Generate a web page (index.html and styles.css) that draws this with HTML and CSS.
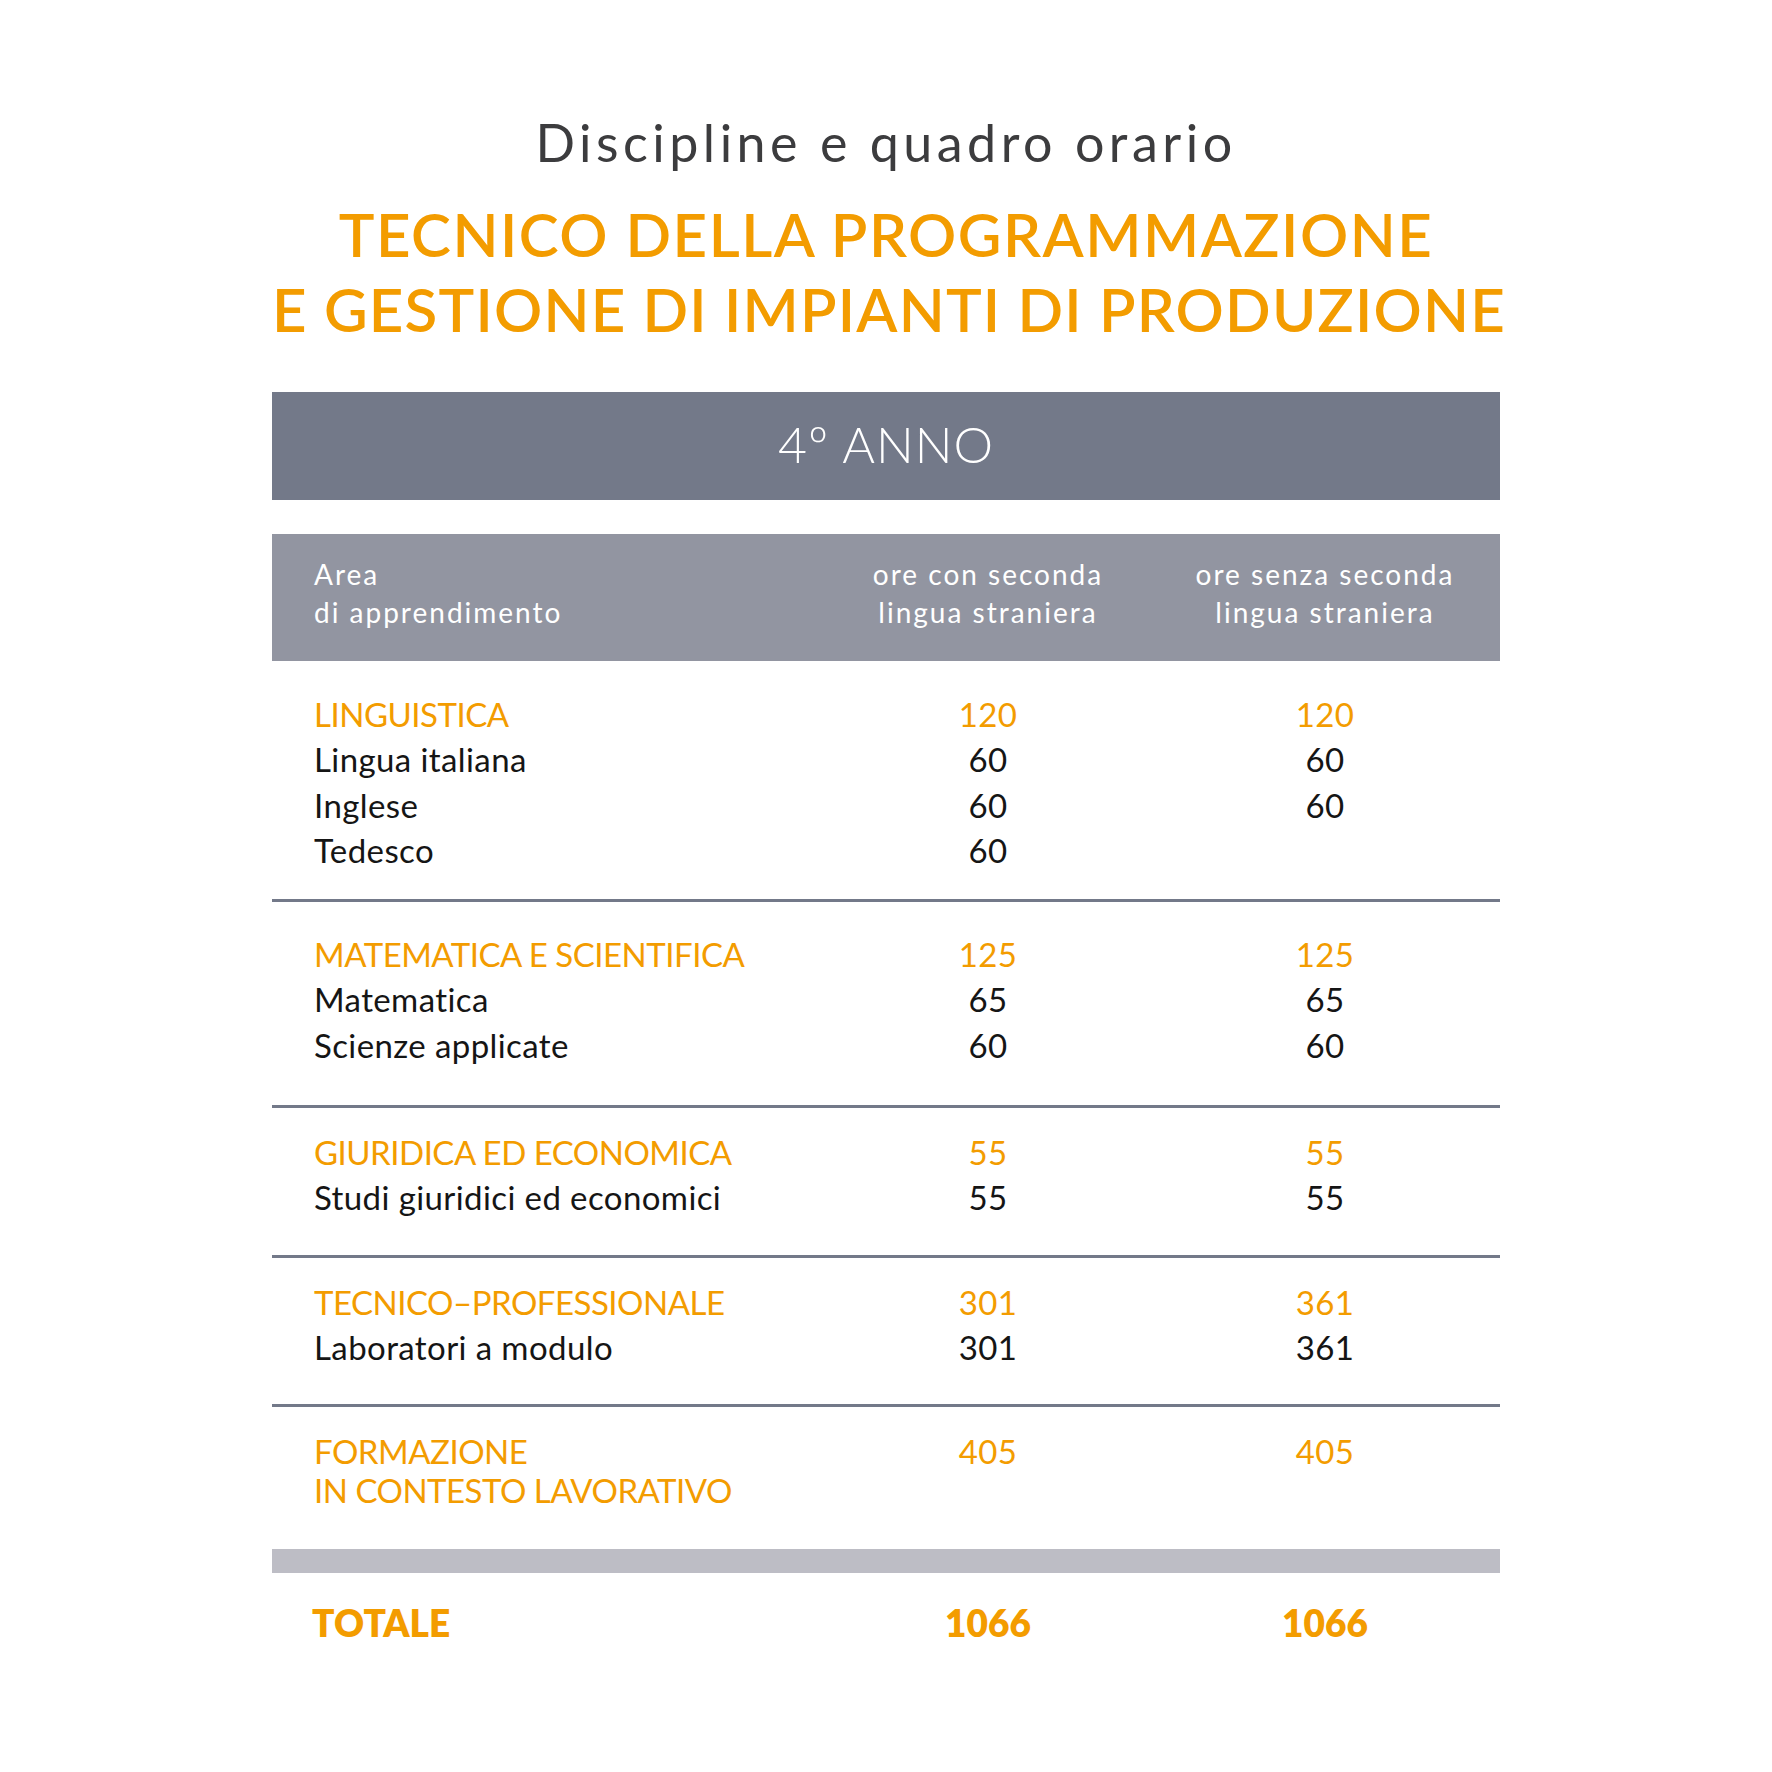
FILE: index.html
```html
<!DOCTYPE html>
<html lang="it">
<head>
<meta charset="utf-8">
<title>Discipline e quadro orario</title>
<link rel="stylesheet" href="styles.css">
</head>
<body>
<main class="page">
  <h1 class="title">Discipline e quadro orario</h1>
  <h2 class="course">
    <span class="course-line">TECNICO DELLA PROGRAMMAZIONE</span>
    <span class="course-line second">E GESTIONE DI IMPIANTI DI PRODUZIONE</span>
  </h2>

  <div class="year">4º ANNO</div>

  <div class="thead grid">
    <div class="cell-label">Area<br>di apprendimento</div>
    <div class="cell-num">ore con seconda<br>lingua straniera</div>
    <div class="cell-num">ore senza seconda<br>lingua straniera</div>
  </div>

  <section class="group g1">
    <div class="row grid cat"><div class="cell-label">LINGUISTICA</div><div class="cell-num">120</div><div class="cell-num">120</div></div>
    <div class="row grid"><div class="cell-label">Lingua italiana</div><div class="cell-num">60</div><div class="cell-num">60</div></div>
    <div class="row grid"><div class="cell-label">Inglese</div><div class="cell-num">60</div><div class="cell-num">60</div></div>
    <div class="row grid"><div class="cell-label">Tedesco</div><div class="cell-num">60</div><div class="cell-num"></div></div>
  </section>

  <section class="group g2">
    <div class="row grid cat"><div class="cell-label">MATEMATICA E SCIENTIFICA</div><div class="cell-num">125</div><div class="cell-num">125</div></div>
    <div class="row grid"><div class="cell-label">Matematica</div><div class="cell-num">65</div><div class="cell-num">65</div></div>
    <div class="row grid"><div class="cell-label">Scienze applicate</div><div class="cell-num">60</div><div class="cell-num">60</div></div>
  </section>

  <section class="group">
    <div class="row grid cat"><div class="cell-label">GIURIDICA ED ECONOMICA</div><div class="cell-num">55</div><div class="cell-num">55</div></div>
    <div class="row grid"><div class="cell-label">Studi giuridici ed economici</div><div class="cell-num">55</div><div class="cell-num">55</div></div>
  </section>

  <section class="group">
    <div class="row grid cat"><div class="cell-label">TECNICO–PROFESSIONALE</div><div class="cell-num">301</div><div class="cell-num">361</div></div>
    <div class="row grid"><div class="cell-label">Laboratori a modulo</div><div class="cell-num">301</div><div class="cell-num">361</div></div>
  </section>

  <section class="group g5">
    <div class="row grid cat tight"><div class="cell-label">FORMAZIONE<br>IN CONTESTO LAVORATIVO</div><div class="cell-num">405</div><div class="cell-num">405</div></div>
  </section>

  <div class="sumbar"></div>

  <div class="total grid">
    <div class="cell-label">TOTALE</div>
    <div class="cell-num">1066</div>
    <div class="cell-num">1066</div>
  </div>
</main>
</body>
</html>
```

FILE: styles.css
```css
html, body {
  margin: 0;
  padding: 0;
  background: #ffffff;
}

body {
  font-family: "Lato", "Liberation Sans", sans-serif;
  color: #151515;
}

.page {
  width: 1228px;
  margin: 0 auto;
  padding-top: 112px;
  padding-bottom: 80px;
}

.title {
  margin: 0;
  font-size: 52px;
  line-height: 60px;
  font-weight: 400;
  color: #3c3c3e;
  text-align: center;
  letter-spacing: 4.5px;
}

.course {
  margin: 25px 0 0;
  font-size: 60px;
  line-height: 75px;
  font-weight: 600;
  color: #f39c00;
  text-align: center;
  white-space: nowrap;
}

.course-line {
  display: block;
  letter-spacing: 1.5px;
}

.course-line.second {
  letter-spacing: 1.2px;
}

.year {
  margin-top: 45px;
  height: 108px;
  background: #737989;
  color: #ffffff;
  font-size: 50px;
  font-weight: 300;
  line-height: 105px;
  text-align: center;
  letter-spacing: 1px;
}

.grid {
  display: grid;
  grid-template-columns: 554px 324px 350px;
}

.cell-label {
  padding-left: 42px;
}

.cell-num {
  text-align: center;
}

.thead {
  margin-top: 34px;
  background: #9295a1;
  color: #ffffff;
  font-size: 28px;
  line-height: 38px;
  font-weight: 400;
  letter-spacing: 2px;
  padding: 21px 0 30px;
}

.group {
  border-bottom: 3px solid #737989;
  padding: 22px 0 34px;
}

.group.g1 {
  padding: 31px 0 26px;
}

.group.g2 {
  padding: 30px 0 37px;
}

.group.g5 {
  border-bottom: 0;
  padding: 25px 0 39px;
}

.row {
  font-size: 33px;
  line-height: 45.3px;
  font-weight: 400;
  color: #151515;
  letter-spacing: 0.4px;
}

.row.cat {
  color: #f39c00;
  letter-spacing: -0.5px;
}

.row.cat .cell-num {
  letter-spacing: 0.4px;
}

.row.tight {
  line-height: 39px;
}

.sumbar {
  height: 24px;
  background: #bdbdc5;
}

.total {
  margin-top: 27px;
  font-size: 37px;
  line-height: 45px;
  font-weight: 800;
  color: #f39c00;
}

.total .cell-label {
  padding-left: 40px;
}
```
